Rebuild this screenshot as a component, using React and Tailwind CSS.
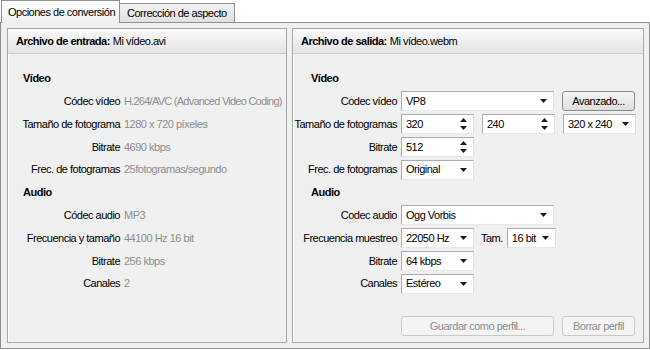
import React from "react";

const Arrow = () => (
    <svg width="7" height="4" viewBox="0 0 7 4" className="shrink-0">
        <path d="M0 0H7L3.5 4Z" fill="#1a1a1a" />
    </svg>
);

const Spin = () => (
    <svg width="7" height="12" viewBox="0 0 7 12" className="shrink-0">
        <path d="M3.5 0L7 4H0Z" fill="#1a1a1a" />
        <path d="M0 8H7L3.5 12Z" fill="#1a1a1a" />
    </svg>
);

const Select = ({ value, w }) => (
    <div className={`${w} h-[20px] bg-white border border-[#abadb3] border-b-[#e3e9ef] border-r-[#dbdfe6] flex items-center justify-between pl-[4px] pr-[6px]`}>
        <span>{value}</span>
        <Arrow />
    </div>
);

const Spinner = ({ value }) => (
    <div className="w-[73px] h-[20px] bg-white border border-[#abadb3] border-b-[#e3e9ef] border-r-[#dbdfe6] flex items-center justify-between pl-[4px] pr-[6px]">
        <span>{value}</span>
        <Spin />
    </div>
);

const Button = ({ children, w, disabled }) => (
    <div className={`${w} h-[20px] rounded-[3px] border flex items-center justify-center ${disabled ? "border-[#c9c9c9] bg-[#f4f4f4] text-[#8d8d8d]" : "border-[#8a8a8a] bg-gradient-to-b from-[#f6f6f6] to-[#dedede] text-black"}`}>
        {children}
    </div>
);

const Panel = ({ title, file, children }) => (
    <div className="h-full flex flex-col border border-[#a7a7a7] shadow-[inset_1px_1px_0_#ffffff]">
        <div className="h-[25px] shrink-0 flex items-center pl-[8px] border-b border-[#cacaca] bg-gradient-to-b from-[#fafafa] to-[#e4e4e4]">
            <span className="font-bold">{title}</span>
            <span className="ml-[3px]">{file}</span>
        </div>
        <div className="pt-[13px] flex flex-col">{children}</div>
    </div>
);

const Heading = ({ children, pl }) => (
    <div className={`h-[23px] flex items-center font-bold ${pl}`}>{children}</div>
);

const InfoRow = ({ label, value, tight }) => (
    <div className="h-[22.75px] flex items-center whitespace-nowrap">
        <div className="w-[112px] shrink-0 text-right">{label}</div>
        <div className={`ml-[4px] text-[#8d8d8d] ${tight ? "tracking-[-0.75px]" : ""}`}>{value}</div>
    </div>
);

const FormRow = ({ label, children }) => (
    <div className="h-[22.75px] flex items-center whitespace-nowrap">
        <div className="w-[104px] shrink-0 text-right">{label}</div>
        <div className="ml-[4px] flex items-center gap-[8px]">{children}</div>
    </div>
);

export default function App() {
    return (
        <div className="w-[650px] h-[350px] bg-white flex flex-col text-[11px] tracking-[-0.5px] text-black whitespace-nowrap font-['Liberation_Sans',Arial,sans-serif]">
            <div className="h-[22px] flex items-end pl-[1px] shrink-0">
                <div className="relative z-10 -mb-px h-[23px] w-[119px] flex items-center pl-[6px] border border-b-0 border-[#8e8f8f] bg-gradient-to-b from-[#ffffff] to-[#f0f0f0]">
                    Opciones de conversión
                </div>
                <div className="h-[19px] w-[115px] flex items-center pl-[7px] border border-l-0 border-b-0 border-[#8e8f8f] bg-gradient-to-b from-[#f3f3f3] to-[#e1e1e1]">
                    Corrección de aspecto
                </div>
            </div>
            <div className="h-[327px] border border-[#8e8f8f] bg-[#f0f0f0] flex gap-[5px] pl-[6px] pr-[5px] py-[5px]">
                <div className="w-[280px]">
                    <Panel title="Archivo de entrada:" file="Mi vídeo.avi">
                        <Heading pl="pl-[15px]">Vídeo</Heading>
                        <InfoRow label="Códec vídeo" value="H.264/AVC (Advanced Video Coding)" tight />
                        <InfoRow label="Tamaño de fotograma" value="1280 x 720 píxeles" />
                        <InfoRow label="Bitrate" value="4690 kbps" />
                        <InfoRow label="Frec. de fotogramas" value="25fotogramas/segundo" />
                        <Heading pl="pl-[15px]">Audio</Heading>
                        <InfoRow label="Códec audio" value="MP3" />
                        <InfoRow label="Frecuencia y tamaño" value="44100 Hz 16 bit" />
                        <InfoRow label="Bitrate" value="256 kbps" />
                        <InfoRow label="Canales" value="2" />
                    </Panel>
                </div>
                <div className="w-[352px]">
                    <Panel title="Archivo de salida:" file="Mi vídeo.webm">
                        <Heading pl="pl-[18px]">Vídeo</Heading>
                        <FormRow label="Codec vídeo">
                            <Select value="VP8" w="w-[153px]" />
                            <Button w="w-[73px]">Avanzado...</Button>
                        </FormRow>
                        <FormRow label="Tamaño de fotogramas">
                            <Spinner value="320" />
                            <Spinner value="240" />
                            <Select value="320 x 240" w="w-[73px]" />
                        </FormRow>
                        <FormRow label="Bitrate">
                            <Spinner value="512" />
                        </FormRow>
                        <FormRow label="Frec. de fotogramas">
                            <Select value="Original" w="w-[73px]" />
                        </FormRow>
                        <Heading pl="pl-[18px]">Audio</Heading>
                        <FormRow label="Codec audio">
                            <Select value="Ogg Vorbis" w="w-[153px]" />
                        </FormRow>
                        <FormRow label="Frecuencia muestreo">
                            <Select value="22050 Hz" w="w-[73px]" />
                            <div className="flex items-center gap-[4px] -ml-[1px]">
                                <span>Tam.</span>
                                <Select value="16 bit" w="w-[49px]" />
                            </div>
                        </FormRow>
                        <FormRow label="Bitrate">
                            <Select value="64 kbps" w="w-[73px]" />
                        </FormRow>
                        <FormRow label="Canales">
                            <Select value="Estéreo" w="w-[73px]" />
                        </FormRow>
                        <div className="mt-[21px] ml-[108px] flex gap-[8px]">
                            <Button w="w-[153px]" disabled>Guardar como perfil...</Button>
                            <Button w="w-[73px]" disabled>Borrar perfil</Button>
                        </div>
                    </Panel>
                </div>
            </div>
        </div>
    );
}
